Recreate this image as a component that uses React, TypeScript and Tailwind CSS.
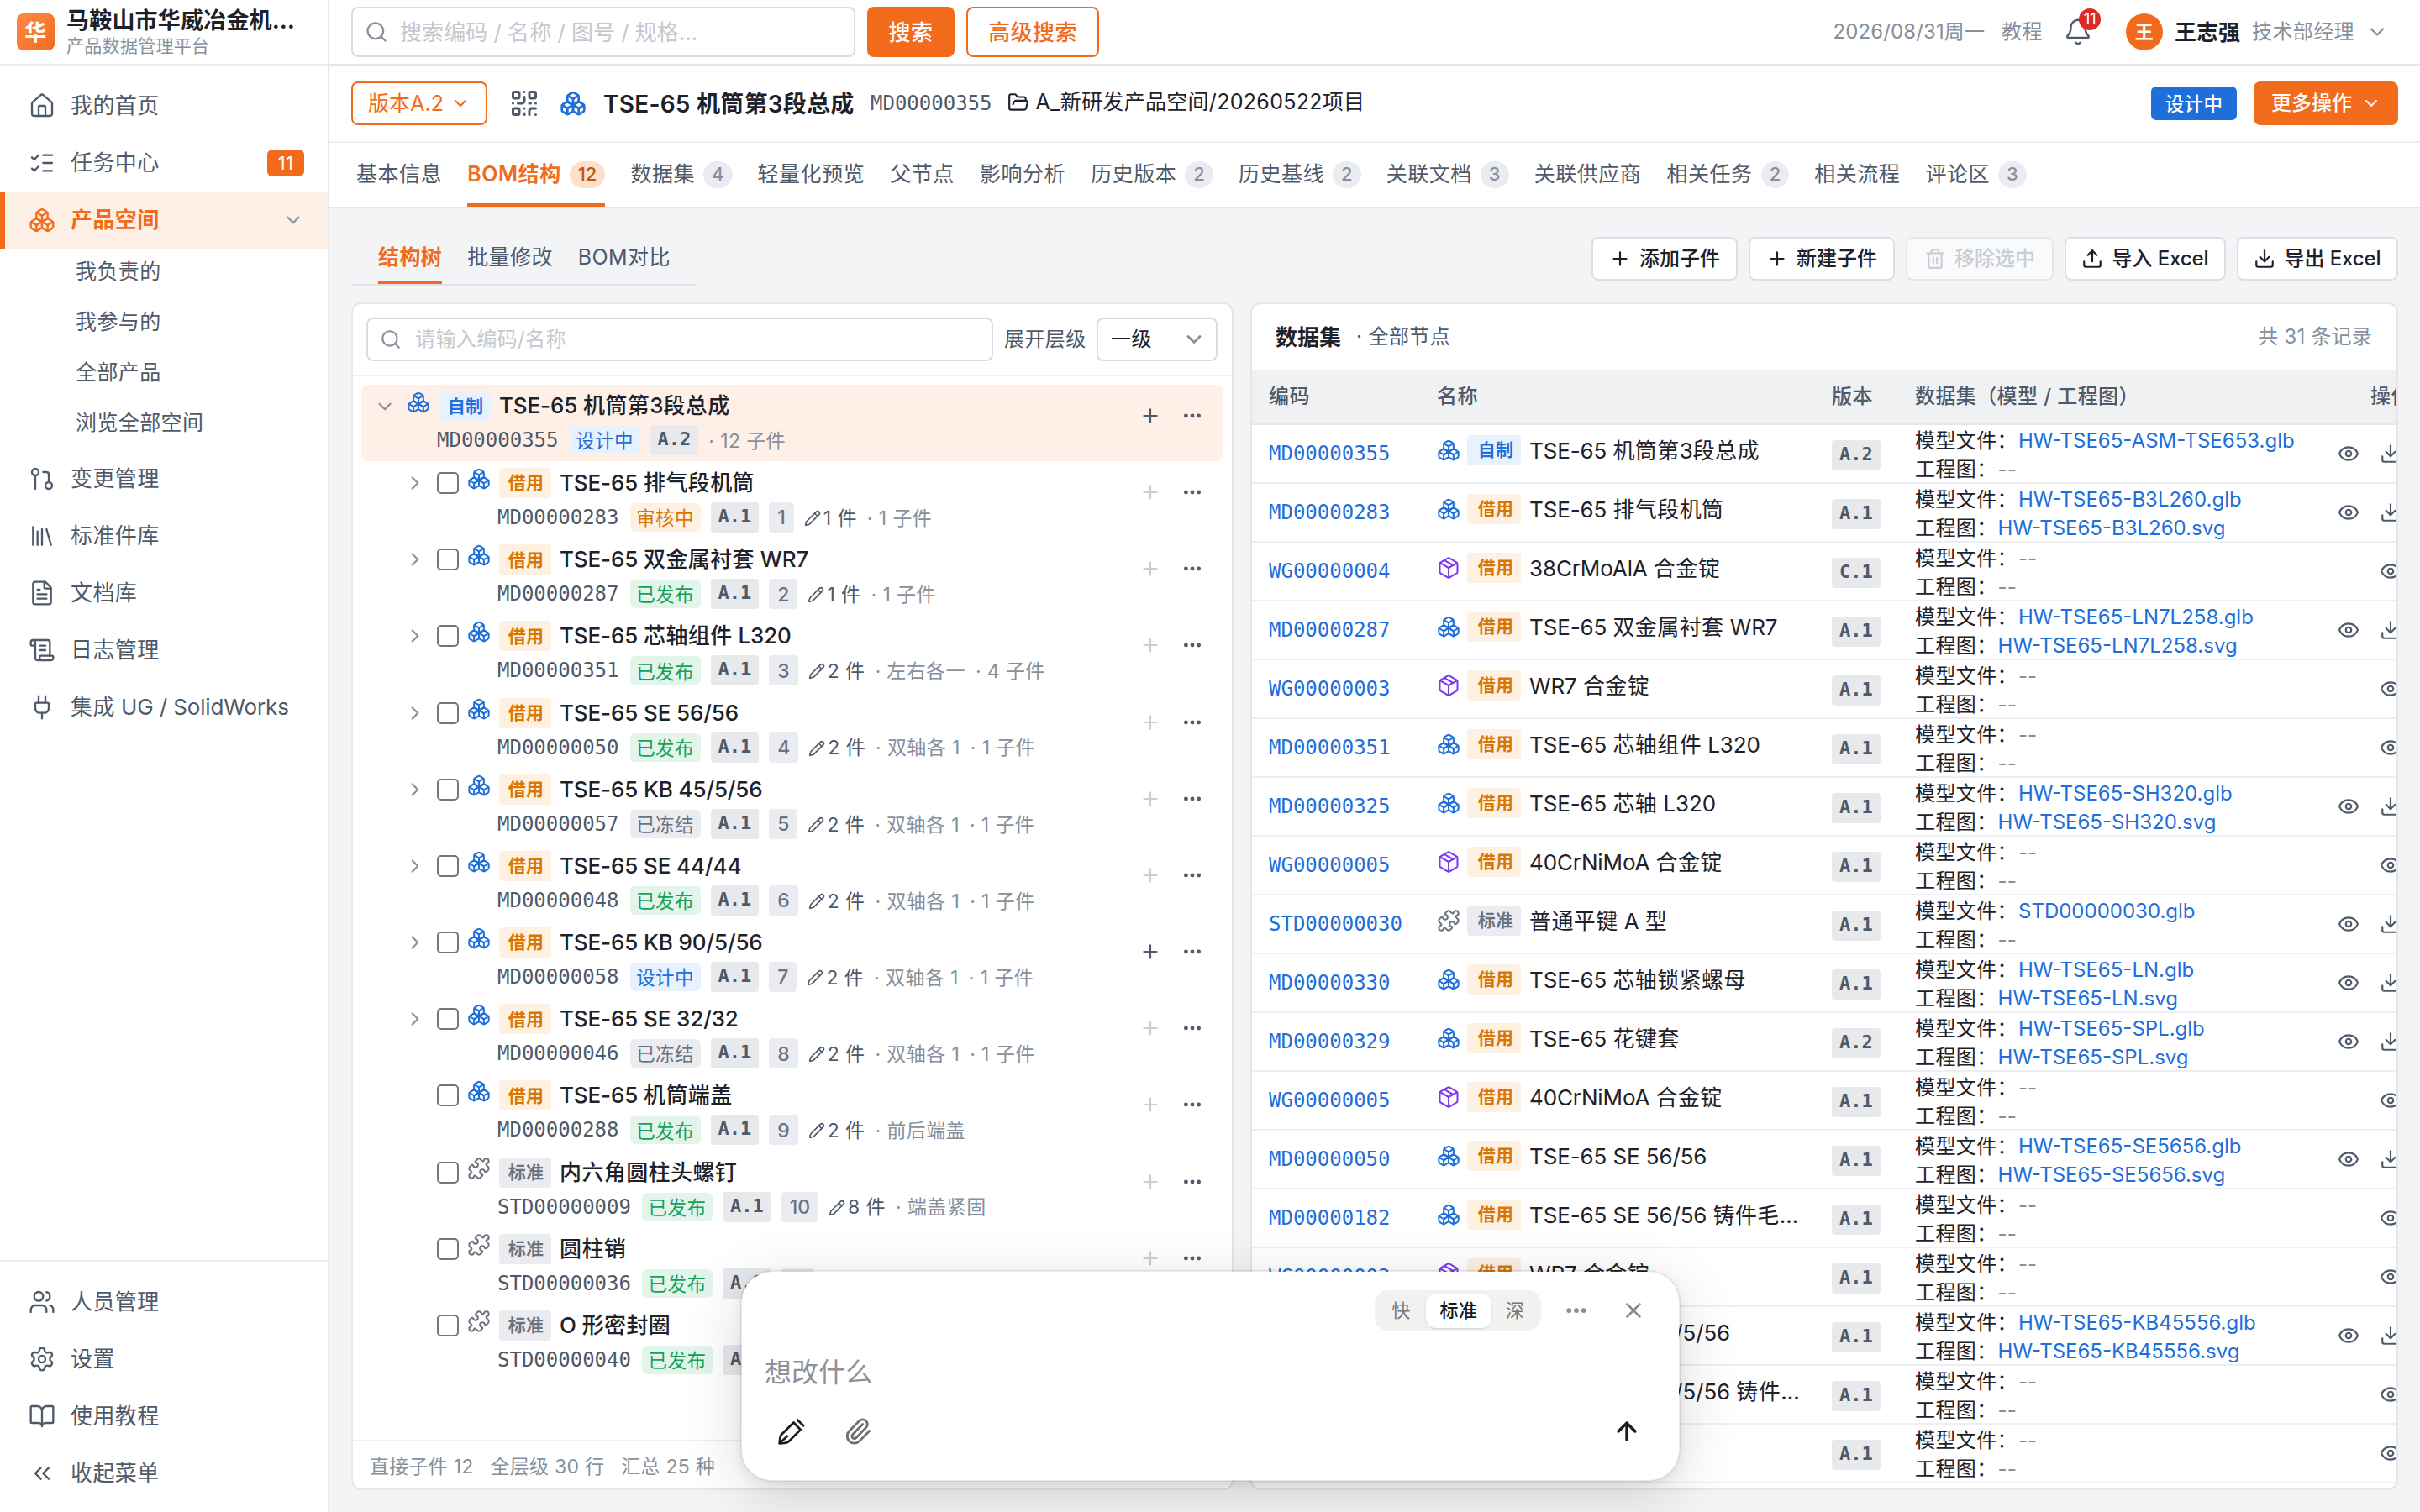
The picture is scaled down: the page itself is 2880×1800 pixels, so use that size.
import type { ReactNode } from "react";
import {
  ArrowUp,
  Bell,
  BookOpen,
  Boxes,
  ChevronDown,
  ChevronRight,
  ChevronsLeft,
  Download,
  Ellipsis,
  Eye,
  FileText,
  FolderOpen,
  GitPullRequest,
  House,
  Library,
  ListChecks,
  Package,
  Paperclip,
  Pencil,
  Plug,
  Plus,
  Puzzle,
  QrCode,
  ScrollText,
  Search,
  Settings,
  Trash2,
  Upload,
  Users,
  X,
  type LucideIcon,
} from "lucide-react";
import clsx from "clsx";

type Kind = "part" | "raw" | "std";
type Source = "自制" | "借用" | "标准";
type Status = "设计中" | "审核中" | "已发布" | "已冻结";

interface TreeItem {
  code: string;
  name: string;
  source: Source;
  status: Status;
  qty: number;
  note?: string;
  children?: number;
  canAdd?: boolean;
}

interface DataRow {
  code: string;
  name: string;
  kind: Kind;
  source: Source;
  version: string;
  model?: string;
  drawing?: string;
}

const subMenu = ["我负责的", "我参与的", "全部产品", "浏览全部空间"];

const tabs: { label: string; count?: number }[] = [
  { label: "基本信息" },
  { label: "BOM结构", count: 12 },
  { label: "数据集", count: 4 },
  { label: "轻量化预览" },
  { label: "父节点" },
  { label: "影响分析" },
  { label: "历史版本", count: 2 },
  { label: "历史基线", count: 2 },
  { label: "关联文档", count: 3 },
  { label: "关联供应商" },
  { label: "相关任务", count: 2 },
  { label: "相关流程" },
  { label: "评论区", count: 3 },
];

const tree: TreeItem[] = [
  { code: "MD00000283", name: "TSE-65 排气段机筒", source: "借用", status: "审核中", qty: 1, children: 1 },
  { code: "MD00000287", name: "TSE-65 双金属衬套 WR7", source: "借用", status: "已发布", qty: 1, children: 1 },
  { code: "MD00000351", name: "TSE-65 芯轴组件 L320", source: "借用", status: "已发布", qty: 2, note: "左右各一", children: 4 },
  { code: "MD00000050", name: "TSE-65 SE 56/56", source: "借用", status: "已发布", qty: 2, note: "双轴各 1", children: 1 },
  { code: "MD00000057", name: "TSE-65 KB 45/5/56", source: "借用", status: "已冻结", qty: 2, note: "双轴各 1", children: 1 },
  { code: "MD00000048", name: "TSE-65 SE 44/44", source: "借用", status: "已发布", qty: 2, note: "双轴各 1", children: 1 },
  { code: "MD00000058", name: "TSE-65 KB 90/5/56", source: "借用", status: "设计中", qty: 2, note: "双轴各 1", children: 1, canAdd: true },
  { code: "MD00000046", name: "TSE-65 SE 32/32", source: "借用", status: "已冻结", qty: 2, note: "双轴各 1", children: 1 },
  { code: "MD00000288", name: "TSE-65 机筒端盖", source: "借用", status: "已发布", qty: 2, note: "前后端盖" },
  { code: "STD00000009", name: "内六角圆柱头螺钉", source: "标准", status: "已发布", qty: 8, note: "端盖紧固" },
  { code: "STD00000036", name: "圆柱销", source: "标准", status: "已发布", qty: 2 },
  { code: "STD00000040", name: "O 形密封圈", source: "标准", status: "已发布", qty: 2 },
];

const rows: DataRow[] = [
  { code: "MD00000355", name: "TSE-65 机筒第3段总成", kind: "part", source: "自制", version: "A.2", model: "HW-TSE65-ASM-TSE653.glb" },
  { code: "MD00000283", name: "TSE-65 排气段机筒", kind: "part", source: "借用", version: "A.1", model: "HW-TSE65-B3L260.glb", drawing: "HW-TSE65-B3L260.svg" },
  { code: "WG00000004", name: "38CrMoAlA 合金锭", kind: "raw", source: "借用", version: "C.1" },
  { code: "MD00000287", name: "TSE-65 双金属衬套 WR7", kind: "part", source: "借用", version: "A.1", model: "HW-TSE65-LN7L258.glb", drawing: "HW-TSE65-LN7L258.svg" },
  { code: "WG00000003", name: "WR7 合金锭", kind: "raw", source: "借用", version: "A.1" },
  { code: "MD00000351", name: "TSE-65 芯轴组件 L320", kind: "part", source: "借用", version: "A.1" },
  { code: "MD00000325", name: "TSE-65 芯轴 L320", kind: "part", source: "借用", version: "A.1", model: "HW-TSE65-SH320.glb", drawing: "HW-TSE65-SH320.svg" },
  { code: "WG00000005", name: "40CrNiMoA 合金锭", kind: "raw", source: "借用", version: "A.1" },
  { code: "STD00000030", name: "普通平键 A 型", kind: "std", source: "标准", version: "A.1", model: "STD00000030.glb" },
  { code: "MD00000330", name: "TSE-65 芯轴锁紧螺母", kind: "part", source: "借用", version: "A.1", model: "HW-TSE65-LN.glb", drawing: "HW-TSE65-LN.svg" },
  { code: "MD00000329", name: "TSE-65 花键套", kind: "part", source: "借用", version: "A.2", model: "HW-TSE65-SPL.glb", drawing: "HW-TSE65-SPL.svg" },
  { code: "WG00000005", name: "40CrNiMoA 合金锭", kind: "raw", source: "借用", version: "A.1" },
  { code: "MD00000050", name: "TSE-65 SE 56/56", kind: "part", source: "借用", version: "A.1", model: "HW-TSE65-SE5656.glb", drawing: "HW-TSE65-SE5656.svg" },
  { code: "MD00000182", name: "TSE-65 SE 56/56 铸件毛…", kind: "part", source: "借用", version: "A.1" },
  { code: "WG00000003", name: "WR7 合金锭", kind: "raw", source: "借用", version: "A.1" },
  { code: "MD00000057", name: "TSE-65 KB 45/5/56", kind: "part", source: "借用", version: "A.1", model: "HW-TSE65-KB45556.glb", drawing: "HW-TSE65-KB45556.svg" },
  { code: "MD00000183", name: "TSE-65 KB 45/5/56 铸件…", kind: "part", source: "借用", version: "A.1" },
  { code: "WG00000003", name: "WR7 合金锭", kind: "raw", source: "借用", version: "A.1" },
];

const sourceStyle: Record<Source, string> = {
  自制: "bg-[#e8f1fe] text-[#1f6fdb]",
  借用: "bg-[#fef1e1] text-[#d97706]",
  标准: "bg-[#ebecf1] text-[#6b7280]",
};

const statusStyle: Record<Status, string> = {
  设计中: "bg-[#e8f1fe] text-[#1f6fdb]",
  审核中: "bg-[#fef1e1] text-[#d97706]",
  已发布: "bg-[#e3f5ea] text-[#16a05a]",
  已冻结: "bg-[#ebecf1] text-[#6b7280]",
};

const mono = "font-['DejaVu_Sans_Mono',monospace]";

// Latin runs are set a little tighter than the Chinese text around them
function Mixed({ text }: { text: string }) {
  return (
    <>
      {text.split(/([\x20-\x7e]+)/).map((run, i) =>
        i % 2 ? (
          <span key={i} className="tracking-[-0.12px] whitespace-pre">
            {run}
          </span>
        ) : (
          run
        ),
      )}
    </>
  );
}

function KindIcon({ kind }: { kind: Kind }) {
  if (kind === "raw") return <Package className="size-7 shrink-0 text-[#7c3aed]" strokeWidth={1.75} />;
  if (kind === "std") return <Puzzle className="size-7 shrink-0 text-[#6b7280]" strokeWidth={1.75} />;
  return <Boxes className="size-7 shrink-0 text-[#1f6fdb]" strokeWidth={1.75} />;
}

function SourceTag({ source, wide }: { source: Source; wide?: boolean }) {
  return (
    <span
      className={clsx(
        "flex h-9 shrink-0 items-center justify-center rounded text-[21px] font-semibold tracking-[0.3px]",
        wide ? "w-16 pl-1" : "w-[62px] pl-0.5",
        sourceStyle[source],
      )}
    >
      {source}
    </span>
  );
}

function VersionTag({ children }: { children: ReactNode }) {
  return (
    <span
      className={clsx(
        "flex h-9 shrink-0 items-center rounded bg-[#e8e9ed] px-[9px] pb-[3px] text-[22px] font-bold tracking-normal text-[#4e5969]",
        mono,
      )}
    >
      {children}
    </span>
  );
}

function NavItem({ icon: Icon, label, badge, active }: { icon: LucideIcon; label: string; badge?: number; active?: boolean }) {
  return (
    <div
      className={clsx(
        "flex h-[68px] shrink-0 items-center border-l-[6px] pr-7 pl-7",
        active ? "border-[#f26b1d] bg-[#fff0e7] font-semibold text-[#f26b1d]" : "border-transparent text-[#4e5969]",
      )}
    >
      <Icon className="size-8" strokeWidth={1.75} />
      <span className="ml-[18px] flex-1 pb-0.5 whitespace-nowrap">
        <Mixed text={label} />
      </span>
      {badge && (
        <span className="flex h-8 w-11 items-center justify-center rounded-md bg-[#f26b1d] text-[22px] text-white">
          {badge}
        </span>
      )}
      {active && <ChevronDown className="size-[26px] text-[#86909c]" />}
    </div>
  );
}

function Sidebar() {
  return (
    <aside className="flex w-[392px] shrink-0 flex-col border-r-2 border-[#e5e6eb] bg-white">
      <div className="flex h-[78px] shrink-0 items-center border-b-2 border-[#eeeff3] pl-5">
        <div className="flex h-11 w-[45px] items-center justify-center rounded-lg bg-linear-to-br from-[#ff8a42] to-[#f26b1d] text-[26px] font-bold text-white">
          华
        </div>
        <div className="ml-[14px] flex flex-col">
          <span className="text-[27px] leading-[34px] font-bold tracking-[0.2px] text-[#1d2129]">马鞍山市华威冶金机…</span>
          <span className="text-[21px] leading-[26px] tracking-[0.3px] text-[#86909c]">产品数据管理平台</span>
        </div>
      </div>
      <nav className="flex flex-1 flex-col pt-[14px]">
        <NavItem icon={House} label="我的首页" />
        <NavItem icon={ListChecks} label="任务中心" badge={11} />
        <NavItem icon={Boxes} label="产品空间" active />
        <div className="-mt-[2px] mb-[2px] flex flex-col">
          {subMenu.map((label) => (
            <div key={label} className="flex h-[60px] items-center pb-px pl-[90px] text-[25px] text-[#4e5969]">
              {label}
            </div>
          ))}
        </div>
        <NavItem icon={GitPullRequest} label="变更管理" />
        <NavItem icon={Library} label="标准件库" />
        <NavItem icon={FileText} label="文档库" />
        <NavItem icon={ScrollText} label="日志管理" />
        <NavItem icon={Plug} label="集成 UG / SolidWorks" />
      </nav>
      <div className="flex flex-col border-t-2 border-[#eeeff3] pt-[14px] pb-3">
        <NavItem icon={Users} label="人员管理" />
        <NavItem icon={Settings} label="设置" />
        <NavItem icon={BookOpen} label="使用教程" />
        <NavItem icon={ChevronsLeft} label="收起菜单" />
      </div>
    </aside>
  );
}

function TopBar() {
  return (
    <header className="flex h-[78px] shrink-0 items-center border-b-2 border-[#e5e6eb] bg-white pr-[37px] pl-[26px]">
      <div className="flex h-[60px] w-[600px] items-center rounded-lg border-2 border-[#d9dce4] pl-[14px]">
        <Search className="size-7 text-[#86909c]" />
        <span className="ml-[14px] tracking-[0.1px] text-[#c4c8d0]">
          <Mixed text="搜索编码 / 名称 / 图号 / 规格..." />
        </span>
      </div>
      <button className="ml-[14px] h-[60px] w-[104px] rounded-lg bg-[#f26b1d] font-medium text-white">搜索</button>
      <button className="ml-[14px] h-[60px] w-[158px] rounded-lg border-2 border-[#f26b1d] font-medium text-[#f26b1d]">
        高级搜索
      </button>
      <div className="ml-auto flex items-center text-[24px] text-[#86909c]">
        <span className="tracking-[0.1px]">2026/08/31周一</span>
        <span className="ml-5 w-[48px] whitespace-nowrap">教程</span>
        <div className="relative ml-[26px]">
          <Bell className="size-[34px] text-[#4e5969]" strokeWidth={1.75} />
          <span className="absolute -top-[11px] left-[18px] flex size-[26px] items-center justify-center rounded-full bg-[#dc2b26] text-[19px] tracking-tight text-white">
            11
          </span>
        </div>
        <span className="ml-10 flex size-11 items-center justify-center rounded-full bg-[#f26b1d] text-[22px] font-semibold text-white">
          王
        </span>
        <span className="ml-[14px] text-[26px] font-semibold tracking-normal text-[#1d2129]">王志强</span>
        <span className="ml-[14px]">技术部经理</span>
        <ChevronDown className="ml-[13px] size-7" />
      </div>
    </header>
  );
}

function TitleBar() {
  return (
    <div className="flex h-[92px] shrink-0 items-center border-b-2 border-[#eeeff3] bg-white pr-[26px] pl-[26px]">
      <button className="flex h-[52px] w-[162px] items-center rounded-lg border-2 border-[#f26b1d] pl-[18px] text-[25px] text-[#f26b1d]">
        <span className="pt-0.5 tracking-[0.1px]">版本A.2</span>
        <ChevronDown className="ml-auto mr-[18px] size-6" />
      </button>
      <QrCode className="ml-[26px] size-9 text-[#4e5969]" />
      <Boxes className="ml-6 size-8 text-[#1f6fdb]" />
      <h1 className="ml-5 w-[300px] pt-px text-[28px] font-semibold tracking-[0.25px] whitespace-nowrap text-[#1d2129]">
        TSE-65 机筒第3段总成
      </h1>
      <span className={clsx("ml-[18px] text-[24px] tracking-normal text-[#4e5969]", mono)}>MD00000355</span>
      <FolderOpen className="mb-[3px] ml-[18px] size-[26px] text-[#1d2129]" />
      <span className="mb-[3px] ml-2 text-[25px] tracking-[0.3px] text-[#1d2129]">A_新研发产品空间/20260522项目</span>
      <span className="ml-auto flex h-10 w-[102px] items-center justify-center rounded-md bg-[#1f6fdb] pt-0.5 text-[22.5px] font-medium text-white">
        设计中
      </span>
      <button className="ml-5 flex h-[52px] w-[172px] items-center rounded-lg bg-[#f26b1d] pl-[21px] text-[24px] font-medium tracking-normal text-white">
        更多操作
        <ChevronDown className="ml-auto mr-5 size-6" />
      </button>
    </div>
  );
}

function TabBar() {
  return (
    <div className="flex h-[78px] shrink-0 gap-[30px] border-b-2 border-[#e5e6eb] bg-white pl-8 text-[25px] tracking-[0.55px]">
      {tabs.map(({ label, count }) => {
        const active = label === "BOM结构";
        return (
          <div
            key={label}
            className={clsx(
              "flex items-center gap-[10px] border-b-4 whitespace-nowrap",
              active ? "border-[#f26b1d] font-semibold text-[#f26b1d]" : "border-transparent text-[#4e5969]",
            )}
          >
            <span className="pt-1">{label}</span>
            {count && (
              <span
                className={clsx(
                  "mt-[3px] flex h-8 items-center rounded-full px-[10px] text-[22px] font-medium tracking-normal",
                  active ? "bg-[#fde0cb] text-[#c2540f]" : "bg-[#ebecf1] text-[#86909c]",
                )}
              >
                {count}
              </span>
            )}
          </div>
        );
      })}
    </div>
  );
}

function ToolButton({ icon: Icon, label, className }: { icon: LucideIcon; label: string; className: string }) {
  return (
    <button
      className={clsx(
        "flex h-[52px] items-center justify-center gap-[10px] rounded-lg border-2 text-[24px] font-medium tracking-normal whitespace-nowrap",
        className,
      )}
    >
      <Icon className="size-[26px]" />
      <span>
        <Mixed text={label} />
      </span>
    </button>
  );
}

function Toolbar() {
  return (
    <div className="flex h-[92px] items-start justify-between">
      <div className="mt-1 flex h-[68px] gap-[30px] border-b-2 border-[#e0e2ea] px-8 text-[25px] tracking-[0.4px] text-[#4e5969]">
        <div className="flex items-center border-b-4 border-[#f26b1d] pt-[7px] font-semibold text-[#f26b1d]">结构树</div>
        <div className="flex items-center border-b-4 border-transparent pt-[7px]">批量修改</div>
        <div className="flex items-center border-b-4 border-transparent pt-[7px]">BOM对比</div>
      </div>
      <div className="mt-[14px] flex gap-[13px]">
        <ToolButton icon={Plus} label="添加子件" className="w-[174px] border-[#dcdfe6] bg-white text-[#1d2129]" />
        <ToolButton icon={Plus} label="新建子件" className="w-[174px] border-[#dcdfe6] bg-white text-[#1d2129]" />
        <ToolButton icon={Trash2} label="移除选中" className="w-[176px] border-[#e5e6eb] bg-[#f9fafb] text-[#c9cdd4]" />
        <ToolButton icon={Upload} label="导入 Excel" className="w-[192px] border-[#dcdfe6] bg-white text-[#1d2129]" />
        <ToolButton icon={Download} label="导出 Excel" className="w-[192px] border-[#dcdfe6] bg-white text-[#1d2129]" />
      </div>
    </div>
  );
}

function RowActions({ enabled }: { enabled?: boolean }) {
  return (
    <div className="ml-auto flex gap-6 pt-6 pr-6 text-[#4e5969]">
      <Plus className={clsx("size-[26px]", !enabled && "text-[#c9cdd4]")} />
      <Ellipsis className="size-[26px]" strokeWidth={2.5} />
    </div>
  );
}

function StatusTag({ status }: { status: Status }) {
  return (
    <span
      className={clsx(
        "flex h-[34px] w-[84px] shrink-0 items-center justify-center rounded-md pt-0.5 text-[22.5px]",
        statusStyle[status],
      )}
    >
      {status}
    </span>
  );
}

function Code({ children }: { children: ReactNode }) {
  return <span className={clsx("mr-px text-[24px] tracking-normal text-[#4e5969]", mono)}>{children}</span>;
}

function TreeRow({ item, index }: { item: TreeItem; index: number }) {
  return (
    <div className="flex h-[91.17px] shrink-0 pl-[51px]">
      <div className="flex pt-[13px]">
        <ChevronRight className={clsx("size-[26px] text-[#86909c]", !item.children && "invisible")} />
        <span className="ml-[13px] size-[26px] rounded-[5px] border-2 border-[#767676] bg-white" />
      </div>
      <div className="mt-[7px] ml-[10px]">
        <KindIcon kind={item.source === "标准" ? "std" : "part"} />
      </div>
      <div className="ml-[10px] flex flex-col gap-[5px] pt-2">
        <div className="flex h-9 items-center gap-[10px]">
          <SourceTag source={item.source} />
          <span className="pb-px text-[26px] font-medium text-[#1d2129]">
            <Mixed text={item.name} />
          </span>
        </div>
        <div className="-ml-[2px] flex h-9 items-center gap-3 text-[23px] text-[#86909c]">
          <Code>{item.code}</Code>
          <StatusTag status={item.status} />
          <VersionTag>A.1</VersionTag>
          <span className="flex h-9 items-center rounded bg-[#ebecf1] px-[10px] pt-px font-medium tracking-normal text-[#6b7280]">
            {index}
          </span>
          <span className="flex items-center gap-[3px] pt-0.5 text-[#4e5969]">
            <Pencil className="size-5" />
            {item.qty} 件
          </span>
          {item.note && <span className="pt-0.5">· {item.note}</span>}
          {item.children && <span className="pt-0.5">· {item.children} 子件</span>}
        </div>
      </div>
      <RowActions enabled={item.canAdd} />
    </div>
  );
}

function TreePanel() {
  return (
    <section className="flex w-[1050px] shrink-0 flex-col rounded-xl border-2 border-[#e5e6eb] bg-white">
      <div className="flex h-[86px] shrink-0 items-center border-b-2 border-[#eeeff3] pr-[17px] pl-4 text-[24px]">
        <div className="flex h-[52px] w-[746px] items-center rounded-lg border-2 border-[#d9dce4] pl-[14px]">
          <Search className="size-[26px] text-[#86909c]" />
          <span className="ml-4 text-[#c4c8d0]">请输入编码/名称</span>
        </div>
        <span className="ml-[13px] text-[#4e5969]">展开层级</span>
        <div className="ml-auto flex h-[52px] w-[144px] items-center rounded-lg border-2 border-[#d9dce4] pr-3 pl-[15px] text-[#1d2129]">
          一级
          <ChevronDown className="ml-auto size-7 text-[#86909c]" strokeWidth={2.4} />
        </div>
      </div>
      <div className="flex flex-1 flex-col px-[10px] pt-[10px]">
        <div className="flex h-[91.17px] shrink-0 rounded-lg bg-[#fff0e7] pl-[15px]">
          <ChevronDown className="mt-[13px] size-[26px] text-[#86909c]" />
          <div className="mt-[7px] ml-[13px]">
            <KindIcon kind="part" />
          </div>
          <div className="ml-[10px] flex flex-col gap-1 pt-2">
            <div className="flex h-9 items-center gap-[10px]">
              <SourceTag source="自制" />
              <span className="pb-[3px] text-[26px] font-medium text-[#1d2129]">
                <Mixed text="TSE-65 机筒第3段总成" />
              </span>
            </div>
            <div className="-ml-[2px] flex h-9 items-center gap-3 text-[23px] text-[#86909c]">
              <Code>MD00000355</Code>
              <StatusTag status="设计中" />
              <VersionTag>A.2</VersionTag>
              <span className="pt-[3px]">· 12 子件</span>
            </div>
          </div>
          <RowActions enabled />
        </div>
        {tree.map((item, i) => (
          <TreeRow key={item.code} item={item} index={i + 1} />
        ))}
      </div>
      <div className="flex h-[58px] shrink-0 items-center gap-5 border-t-2 border-[#eeeff3] pt-1 pl-5 text-[23px] tracking-[0.25px] text-[#86909c]">
        <span>直接子件 12</span>
        <span>全层级 30 行</span>
        <span>汇总 25 种</span>
      </div>
    </section>
  );
}

function FileLine({ label, file }: { label: string; file?: string }) {
  return (
    <div className="leading-[34px] whitespace-nowrap">
      {label}：
      <span className={clsx("ml-px tracking-normal", file ? "text-[#1f6fdb]" : "text-[#86909c]")}>{file ?? "--"}</span>
    </div>
  );
}

function DataPanel() {
  const cols = "grid grid-cols-[200px_470px_99px_502px_77px] pl-5";
  return (
    <section className="flex flex-1 flex-col overflow-hidden rounded-xl border-2 border-[#e5e6eb] bg-white">
      <div className="flex h-[78px] shrink-0 items-center pr-[29px] pl-7 text-[24px]">
        <h2 className="text-[26px] font-bold tracking-normal text-[#1d2129]">数据集</h2>
        <span className="ml-[18px] text-[#4e5969]">· 全部节点</span>
        <span className="ml-auto tracking-[0.2px] text-[#86909c]">共 31 条记录</span>
      </div>
      <div
        className={clsx(
          "h-[66px] shrink-0 items-center border-b-2 border-[#e5e6eb] bg-[#f0f1f3] text-[24px] font-medium whitespace-nowrap text-[#4e5969]",
          cols,
        )}
      >
        <span>编码</span>
        <span>名称</span>
        <span>版本</span>
        <span>数据集（模型 / 工程图）</span>
        <span className="pl-10">操作</span>
      </div>
      {rows.map((row, i) => (
        <div key={i} className={clsx("h-[70px] shrink-0 items-center border-b-2 border-[#eeeff3] text-[24px]", cols)}>
          <span className={clsx("tracking-normal text-[#1f6fdb]", mono)}>{row.code}</span>
          <div className="flex items-center gap-2 pb-2">
            <KindIcon kind={row.kind} />
            <SourceTag source={row.source} wide />
            <span className="ml-0.5 pt-px text-[26px] whitespace-nowrap text-[#1d2129]">
              <Mixed text={row.name} />
            </span>
          </div>
          <div className="flex pt-1">
            <VersionTag>{row.version}</VersionTag>
          </div>
          <div className="-mb-0.5 pt-0.5 text-[#1d2129]">
            <FileLine label="模型文件" file={row.model} />
            <FileLine label="工程图" file={row.drawing} />
          </div>
          <div className="flex justify-end gap-6 text-[#4e5969]">
            <Eye className="size-[26px] shrink-0" />
            {row.model && <Download className="size-[26px] shrink-0" />}
          </div>
        </div>
      ))}
    </section>
  );
}

function PenIcon() {
  return (
    <svg viewBox="0 0 32 32" className="size-8" fill="none" stroke="currentColor" strokeWidth="2.6" strokeLinejoin="round">
      <path d="M22 1.5 31 10" />
      <path d="M18.5 5.5 3.6 20.2C2 22.6 2.2 26 1.6 30.4c4.2-.3 7.6.2 10.2-1.6L26.7 14Z" />
      <path d="M1.6 30.4 11.6 21" />
    </svg>
  );
}

function AssistantBox() {
  return (
    <div className="absolute top-[1512px] left-[881px] flex h-[252px] w-[1119px] flex-col rounded-[38px] border-2 border-black/8 bg-white bg-clip-padding shadow-[0_16px_70px_rgba(0,0,0,0.15),0_4px_12px_rgba(0,0,0,0.06)]">
      <div className="mt-[22px] flex h-12 items-center justify-end pr-[39px] text-[#8a8a8a]">
        <div className="flex h-12 w-[198px] items-center rounded-2xl bg-[#f1f1f0] text-[22px] text-[#777777]">
          <span className="w-[61px] pl-0.5 text-center">快</span>
          <span className="flex h-[41px] w-[78px] items-center justify-center rounded-xl bg-white font-medium text-[#1a1a1a] shadow-sm">
            标准
          </span>
          <span className="w-[56px] text-center">深</span>
        </div>
        <Ellipsis className="ml-[27px] size-[30px]" strokeWidth={2.6} />
        <X className="ml-[38px] size-[30px]" />
      </div>
      <div className="mt-[26px] pl-[27px] text-[32px] leading-[48px] tracking-[0.1px] text-[#919195]">想改什么</div>
      <div className="mt-[26px] flex h-10 items-center pr-[45px] pl-[43px] text-[#1a1a1a]">
        <PenIcon />
        <Paperclip className="ml-[46px] size-[34px] text-[#6f6f6f]" />
        <ArrowUp className="ml-auto size-[34px]" strokeWidth={2.4} />
      </div>
    </div>
  );
}

export default function App() {
  return (
    <div className="relative flex h-[1800px] w-[2880px] overflow-hidden bg-[#f3f4f6] font-[Inter,'Noto_Sans_CJK_SC',sans-serif] text-[26px] tracking-[0.4px]">
      <Sidebar />
      <div className="flex min-w-0 flex-1 flex-col">
        <TopBar />
        <TitleBar />
        <TabBar />
        <main className="flex flex-1 flex-col px-[26px] pt-5 pb-[26px]">
          <Toolbar />
          <div className="flex min-h-0 flex-1 gap-5">
            <TreePanel />
            <DataPanel />
          </div>
        </main>
      </div>
      <AssistantBox />
    </div>
  );
}
